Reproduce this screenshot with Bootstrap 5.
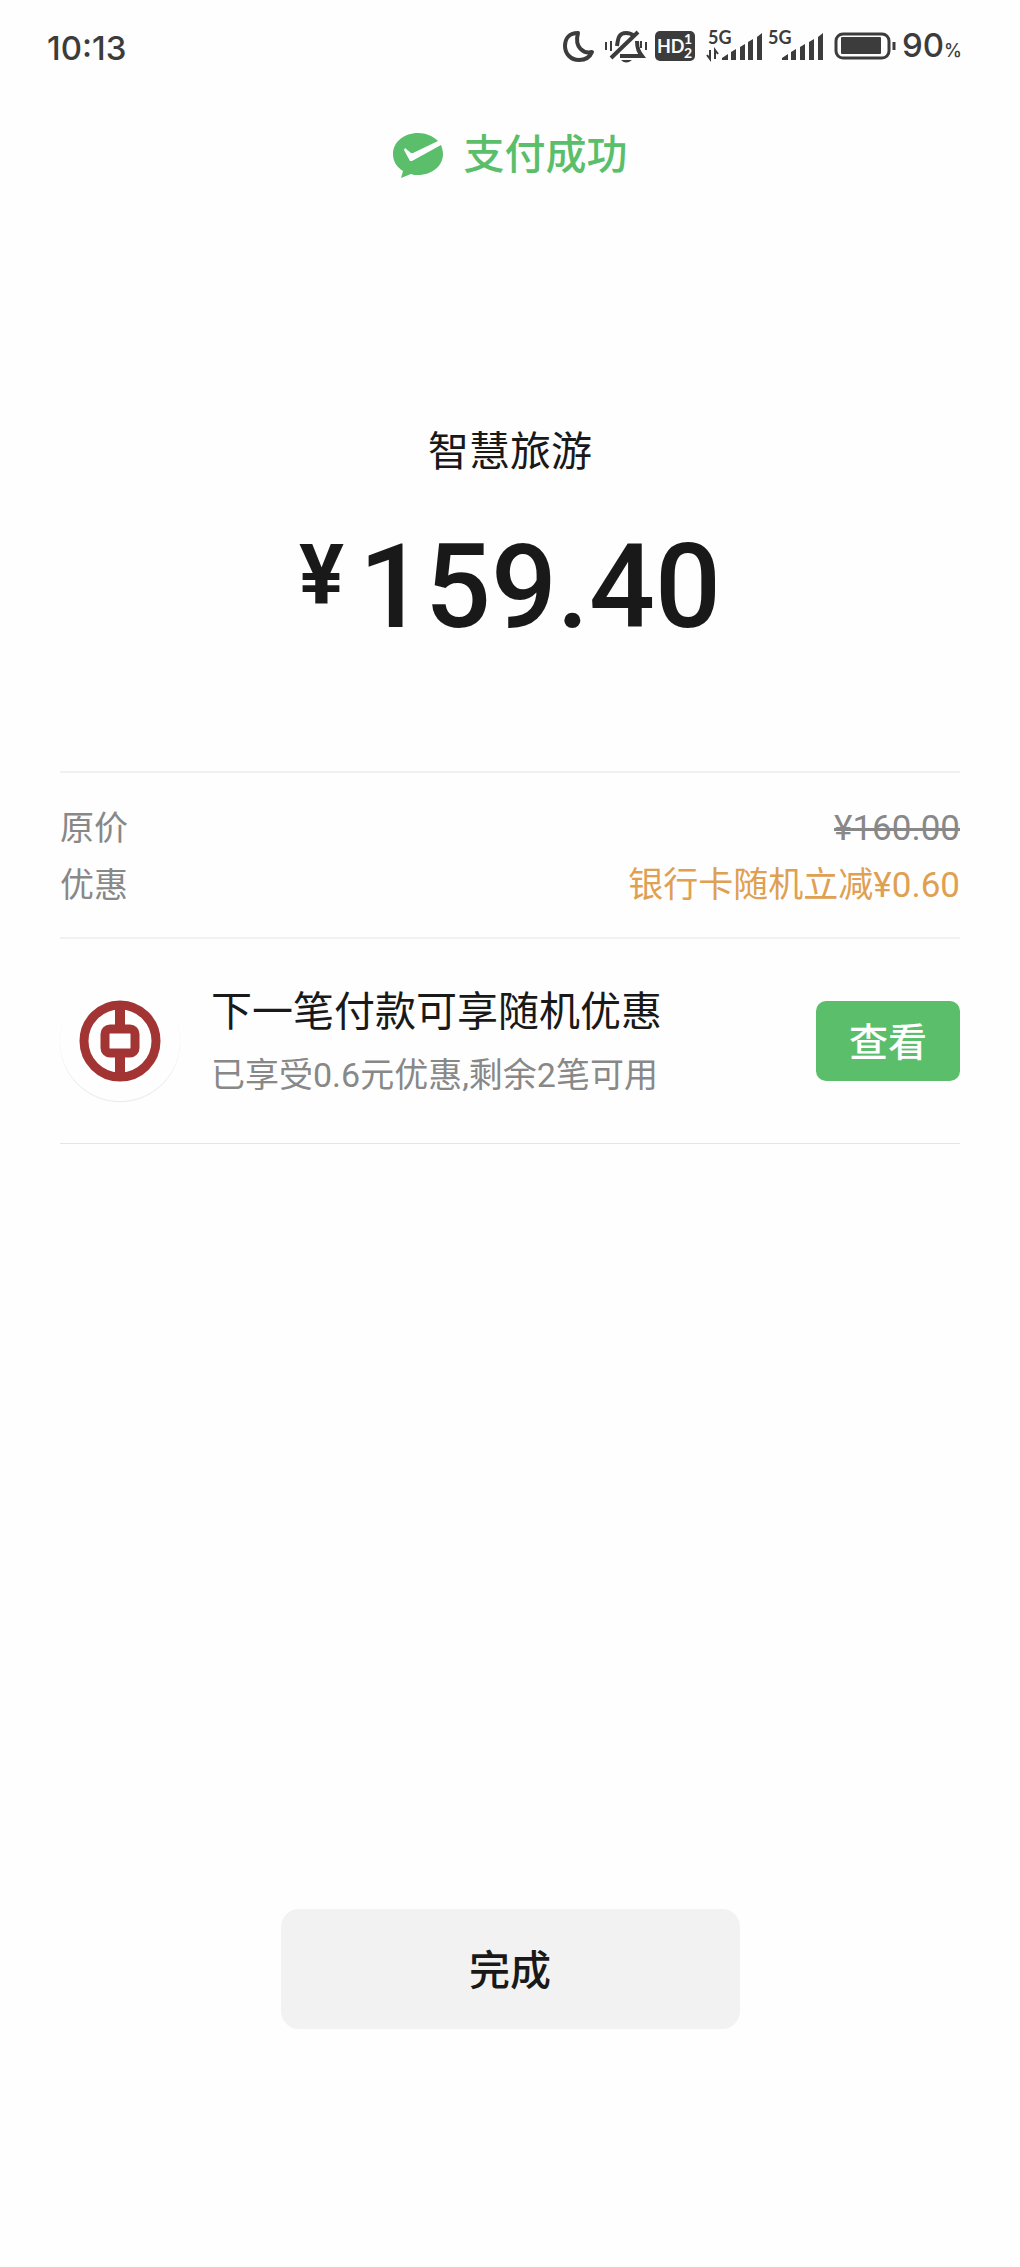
<!DOCTYPE html>
<html lang="zh-CN">
<head>
<meta charset="utf-8">
<meta name="viewport" content="width=device-width, initial-scale=1">
<title>支付成功</title>
<link href="https://cdn.jsdelivr.net/npm/bootstrap@5.3.0/dist/css/bootstrap.min.css" rel="stylesheet">
<style>
body { background: #fefefe; color: #191919; font-family: Roboto, "Noto Sans CJK SC", sans-serif; font-size: 34px; line-height: 56px; }
.status-bar { height: 94px; padding: 2px 58px 0 47px; color: #3c3c3c; }
.status-bar svg { display: block; fill: none; stroke: currentColor; overflow: visible; }
.status-time, .status-level { font-family: Inter, sans-serif; font-size: 33px; font-weight: 500; }
.status-level span { font-size: 18px; }
.svg-text { fill: currentColor; stroke: none; font-family: Lato, sans-serif; font-weight: 700; }
.svg-text-light { fill: #fefefe; }
.pay-title { height: 120px; padding-top: 4px; color: #5bbe6a; font-size: 41px; font-weight: 500; gap: 20px; }
.pay-body { padding: 208px 60px 0; }
.merchant { font-size: 41px; line-height: 60px; }
.amount { margin-top: 37px; gap: 15px; }
.amount-sign { font-size: 84px; line-height: 114px; font-weight: 700; }
.amount-value { font-size: 116px; line-height: 136px; font-weight: 500; }
.price-rows { margin-top: 116px; border-top: 2px solid #f1f1f1; border-bottom: 2px solid #f1f1f1; padding: 27px 0 23px; color: #888; }
.price-rows dt, .price-rows dd { font-weight: 400; margin: 0; line-height: 57px; }
.price-rows dd { font-size: 35px; }
.saving { color: #dfa052; }
.offer { padding: 36px 0; border-bottom: 1px solid #e5e5e5; gap: 31px; }
.offer-logo { width: 120px; height: 120px; box-shadow: 0 1px 1px #e8e8e8; }
.offer-text { padding-top: 6px; }
.offer-title { font-size: 41px; line-height: 62px; }
.offer-note { color: #888; line-height: 64px; }
.btn-view { --bs-btn-bg: #5bbe6a; --bs-btn-color: #fff; --bs-btn-hover-bg: #4eae5d; --bs-btn-hover-color: #fff; --bs-btn-border-width: 0; --bs-btn-border-radius: 10px; --bs-btn-font-size: 39px; --bs-btn-line-height: 76px; --bs-btn-font-weight: 500; --bs-btn-padding-x: 33px; --bs-btn-padding-y: 0; padding-top: 4px; }
.btn-done { --bs-btn-bg: #f2f2f2; --bs-btn-color: #191919; --bs-btn-hover-bg: #e8e8e8; --bs-btn-hover-color: #191919; --bs-btn-border-width: 0; --bs-btn-border-radius: 18px; --bs-btn-font-size: 41px; --bs-btn-font-weight: 500; --bs-btn-line-height: 116px; --bs-btn-padding-y: 0; padding-top: 4px; width: 45%; }
.pay-footer { padding-bottom: 238px; }
</style>
</head>
<body class="d-flex flex-column min-vh-100">
<header class="status-bar d-flex align-items-center justify-content-between">
  <span class="status-time">10:13</span>
  <div class="d-flex align-items-center">
    <svg width="340" height="40" viewBox="0 0 340 40" role="img" aria-label="状态图标">
      <!-- moon -->
      <path d="M16 5C6 5 3 12 3 18C3 26 9 32 17 32C23 32 28 29 30 24C22 26 12 20 16 5Z" stroke-width="4" stroke-linejoin="round"/>
      <!-- muted bell -->
      <path d="M55 18C56 10 57 5 64 5C68 5 70 6 72 8M75 13C75 21 77 24 80 28H58" stroke-width="4"/>
      <path d="M49 30L76 4" stroke-width="4"/>
      <path d="M59 32H70Q64 37 59 32Z" fill="currentColor" stroke="none"/>
      <path d="M44 14V22M49 13V23M84 14V22M79 13V20" stroke-width="2"/>
      <!-- HD voice -->
      <rect x="93" y="3" width="40" height="30" rx="5" fill="currentColor" stroke="none"/>
      <text x="95" y="25" font-size="18" class="svg-text svg-text-light">HD</text>
      <text x="122" y="16" font-size="14" class="svg-text svg-text-light">1</text>
      <text x="122" y="30" font-size="14" class="svg-text svg-text-light">2</text>
      <!-- signal, first card -->
      <text x="146" y="16" font-size="18" class="svg-text">5G</text>
      <path d="M148 22V31L145 27M153 31V22L156 26" stroke-width="2"/>
      <g fill="currentColor" stroke="none">
        <path d="M160 32V30L166 26V32ZM169 32V24L174 21V32ZM178 32V19L183 16V32ZM186 32V14L191 11V32ZM195 32V9L200 5V32Z"/>
        <path d="M220 32V30L226 26V32ZM229 32V24L234 21V32ZM238 32V19L243 16V32ZM247 32V14L252 11V32ZM256 32V9L261 5V32Z"/>
      </g>
      <!-- signal, second card -->
      <text x="206" y="16" font-size="18" class="svg-text">5G</text>
      <!-- battery -->
      <rect x="274" y="6" width="53" height="24" rx="7" stroke-width="3"/>
      <rect x="279" y="9" width="40" height="17" rx="1" fill="currentColor" stroke="none"/>
      <path d="M332 14V22" stroke-width="3"/>
    </svg>
    <div class="status-level">90<span>%</span></div>
  </div>
</header>

<h1 class="pay-title d-flex align-items-center justify-content-center m-0">
  <svg width="51" height="46" viewBox="0 0 51 46" aria-hidden="true">
    <path d="M25 0C11 0 0 9 0 21C0 29 4 34 10 38L8 45L18 41C20 42 23 42 25 42C39 42 50 33 50 21C50 18 49 15 48 12L19 28L18 28L17 28L11 17L12 15L18 20L20 20L45 8C40 3 33 0 25 0Z" fill="#5bbe6a"/>
  </svg>
  <span>支付成功</span>
</h1>

<main class="pay-body">
  <div class="merchant text-center">智慧旅游</div>
  <div class="amount d-flex justify-content-center align-items-start">
    <span class="amount-sign">¥</span><span class="amount-value">159.40</span>
  </div>
  <dl class="price-rows mb-0">
    <div class="d-flex justify-content-between"><dt>原价</dt><dd><del>¥160.00</del></dd></div>
    <div class="d-flex justify-content-between"><dt>优惠</dt><dd class="saving">银行卡随机立减¥0.60</dd></div>
  </dl>
  <section class="offer d-flex align-items-center">
    <div class="offer-logo rounded-circle d-flex align-items-center justify-content-center flex-shrink-0">
      <svg width="82" height="82" viewBox="0 0 82 82" fill="none" stroke="#a33434" role="img" aria-label="中国银行">
        <circle cx="41" cy="41" r="36" stroke-width="9"/>
        <path d="M41 5V29M41 53V77" stroke-width="10"/>
        <rect x="26" y="29" width="30" height="24" rx="5" stroke-width="9"/>
      </svg>
    </div>
    <div class="offer-text flex-grow-1">
      <div class="offer-title">下一笔付款可享随机优惠</div>
      <div class="offer-note">已享受0.6元优惠,剩余2笔可用</div>
    </div>
    <button type="button" class="btn btn-view flex-shrink-0">查看</button>
  </section>
</main>

<footer class="pay-footer mt-auto text-center">
  <button type="button" class="btn btn-done">完成</button>
</footer>
<script src="https://cdn.jsdelivr.net/npm/bootstrap@5.3.0/dist/js/bootstrap.bundle.min.js"></script>
</body>
</html>
